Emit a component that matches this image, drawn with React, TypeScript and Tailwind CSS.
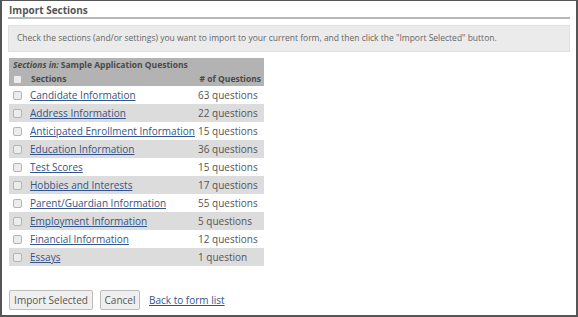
import React from "react";

const rows: [string, string][] = [
  ["Candidate Information", "63 questions"],
  ["Address Information", "22 questions"],
  ["Anticipated Enrollment Information", "15 questions"],
  ["Education Information", "36 questions"],
  ["Test Scores", "15 questions"],
  ["Hobbies and Interests", "17 questions"],
  ["Parent/Guardian Information", "55 questions"],
  ["Employment Information", "5 questions"],
  ["Financial Information", "12 questions"],
  ["Essays", "1 question"],
];

function Box() {
  return <span className="inline-block w-[9px] h-[9px] border border-[#b5b5b5] bg-[#ececec] rounded-[2px] shrink-0" />;
}

export default function App() {
  return (
    <div
      className="w-[578px] h-[317px] border-2 border-t border-[#555] bg-white text-[#555] overflow-hidden"
      style={{ fontFamily: '"Open Sans", sans-serif' }}
    >
      <div className="px-[6px] pt-[2px]">
        <div className="text-[10px] font-bold leading-[14px] text-[#555] pl-[1px]">Import Sections</div>
        <div className="h-[2px] bg-[#b8b8b8]" />
        <div className="mt-[6px] h-[27px] bg-[#ebebeb] border border-[#e0e0e0] flex items-center pl-[8px] text-[8.5px] text-[#666]">
          Check the sections (and/or settings) you want to import to your current form, and then click the "Import Selected" button.
        </div>
        <div className="mt-[6px] ml-[1px] w-[255px]">
          <div className="bg-[#b3b3b3] text-[#4a4a4a] text-[8.5px] font-bold">
            <div className="h-[14px] flex items-center pl-[4px]">
              <span className="italic">Sections in:</span>
              <span className="ml-[2px]">Sample Application Questions</span>
            </div>
            <div className="h-[14px] flex items-center pl-[4px] pr-[3px]">
              <Box />
              <span className="ml-[9px]">Sections</span>
              <span className="ml-auto"># of Questions</span>
            </div>
          </div>
          {rows.map(([name, q], i) => (
            <div
              key={name}
              className={`h-[18px] flex items-center pl-[4px] text-[10px] ${i % 2 === 1 ? "bg-[#dcdcdc]" : "bg-white"}`}
            >
              <Box />
              <a href="#" className="ml-[8px] text-[#34548a] underline decoration-1 w-[168px] whitespace-nowrap">
                {name}
              </a>
              <span className="text-[#555] whitespace-nowrap">{q}</span>
            </div>
          ))}
        </div>
        <div className="mt-[24px] ml-[1px] flex items-center text-[10px]">
          <button className="h-[20px] w-[84px] border border-[#bbb] bg-[#efefef] text-[#555] rounded-[2px]">Import Selected</button>
          <button className="ml-[7px] h-[20px] w-[40px] border border-[#bbb] bg-[#efefef] text-[#555] rounded-[2px]">Cancel</button>
          <a href="#" className="ml-[9px] text-[#34548a] underline">Back to form list</a>
        </div>
      </div>
    </div>
  );
}
